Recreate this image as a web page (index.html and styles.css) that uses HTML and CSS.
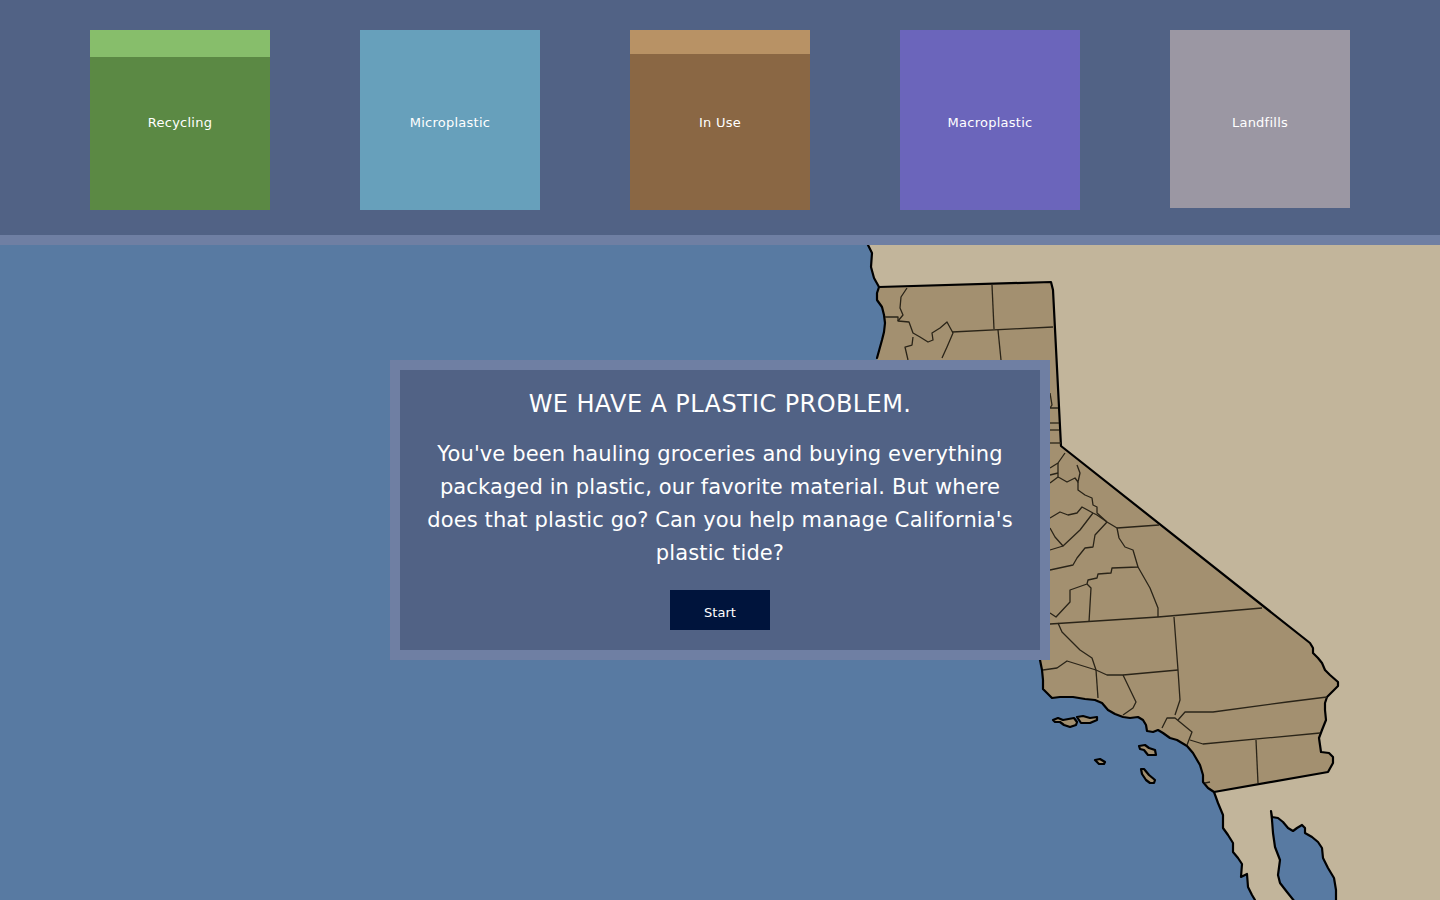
FILE: index.html
```html
<!DOCTYPE html>
<html lang="en">
<head>
<meta charset="utf-8">
<title>Plastic Tide</title>
<link rel="stylesheet" href="styles.css">
</head>
<body>
<header class="topbar">
  <div class="bin bin-recycling"><div class="bin-fill fill-recycling"></div><span class="bin-label">Recycling</span></div>
  <div class="bin bin-micro"><span class="bin-label">Microplastic</span></div>
  <div class="bin bin-inuse"><div class="bin-fill fill-inuse"></div><span class="bin-label">In Use</span></div>
  <div class="bin bin-macro"><span class="bin-label">Macroplastic</span></div>
  <div class="bin bin-landfill"><span class="bin-label">Landfills</span></div>
</header>
<main class="stage">
  <svg class="map" viewBox="0 245 1440 655" width="1440" height="655" aria-hidden="true">
    <path class="land" d="M868 245 L1440 245 L1440 900 L1255 900 L1252 895 L1248 887 L1247 874 L1241 877 L1242 864 L1238 858 L1233 852 L1233 843 L1228 835 L1223 828 L1223 815 L1218 803 L1214 792 L1250 700 L1000 400 L879 287 L874 278 L871 267 L872 253 Z"/>
    <path class="state" d="M879 287 L1051 282 L1053 290 L1061 446 L1310 643 L1313 648 L1313 653 L1318 658 L1322 663 L1325 670 L1330 675 L1338 682 L1338 686 L1332 692 L1327 697 L1325 703 L1325 710 L1326 720 L1322 730 L1319 738 L1321 752 L1329 753 L1333 757 L1333 763 L1328 772 L1214 792 L1208 788 L1203 782 L1203 775 L1200 765 L1193 753 L1187 746 L1177 740 L1170 738 L1163 733 L1158 730 L1153 732 L1147 731 L1146 725 L1143 720 L1138 717 L1130 718 L1123 717 L1115 714 L1108 710 L1102 703 L1095 700 L1085 699 L1073 697 L1060 697 L1052 698 L1047 693 L1043 689 L1043 680 L1042 670 L1040 660 L900 500 L877 358 L882 340 L885 323 L882 307 L877 300 Z"/>
    <path class="coast" d="M868 245 L872 253 L871 267 L874 278 L879 287 L877 293 L877 300 L882 307 L884 315 L885 323 L884 332 L882 340 L877 358"/>
    <path class="coast" d="M1040 660 L1042 670 L1043 680 L1043 689 L1047 693 L1052 698 L1060 697 L1073 697 L1085 699 L1095 700 L1102 703 L1108 710 L1115 714 L1123 717 L1130 718 L1138 717 L1143 720 L1146 725 L1147 731 L1153 732 L1158 730 L1163 733 L1170 738 L1177 740 L1187 746 L1193 753 L1200 765 L1203 775 L1203 782 L1208 788 L1214 792 L1218 803 L1223 815 L1223 828 L1228 835 L1233 843 L1233 852 L1238 858 L1242 864 L1241 877 L1247 874 L1248 887 L1252 895 L1255 900"/>
    <path class="coast" d="M879 287 L1051 282 L1053 290 L1061 446 L1310 643 L1313 648 L1313 653 L1318 658 L1322 663 L1325 670 L1330 675 L1338 682 L1338 686 L1332 692 L1327 697 L1325 703 L1325 710 L1326 720 L1322 730 L1319 738 L1321 752 L1329 753 L1333 757 L1333 763 L1328 772 L1214 792"/>
    <path class="gulf" d="M1271 811 L1272 817 L1278 818 L1283 822 L1288 828 L1293 831 L1297 828 L1302 825 L1305 828 L1305 833 L1312 837 L1318 842 L1322 848 L1323 858 L1328 868 L1334 878 L1336 890 L1336 902 L1295 902 L1287 892 L1280 883 L1278 875 L1280 860 L1275 847 L1273 833 L1272 820 Z"/>
    <path class="island" d="M1053 720 L1058 718 L1063 720 L1074 718 L1077 722 L1076 725 L1070 727 L1064 725 L1060 722 L1055 722 Z"/>
    <path class="island" d="M1077 717 L1083 716 L1090 718 L1097 717 L1097 720 L1090 723 L1081 723 Z"/>
    <path class="island" d="M1095 760 L1100 759 L1105 762 L1104 764 L1099 764 Z"/>
    <path class="island" d="M1139 746 L1145 745 L1149 748 L1155 750 L1156 755 L1148 755 L1144 750 L1140 749 Z"/>
    <path class="island" d="M1141 769 L1144 769 L1149 775 L1155 780 L1154 783 L1150 783 L1146 780 L1142 774 Z"/>
    <g class="counties">
      <path d="M992 285 L994 329"/>
      <path d="M952 332 L1053 327"/>
      <path d="M998 330 L1001 360"/>
      <path d="M907 288 L901 297 L900 308 L903 315 L898 321 L909 322 L913 333 L920 337 L928 342 L933 340 L932 333 L940 328 L947 322 L953 333 L947 347 L942 358"/>
      <path d="M885 317 L898 317 L898 321"/>
      <path d="M913 337 L912 345 L905 347 L908 360"/>
      <path d="M1050 393 L1052 405 L1050 408 L1058 408"/>
      <path d="M1050 423 L1059 423"/>
      <path d="M1050 430 L1059 430"/>
      <path d="M1050 443 L1061 443"/>
      <path d="M1065 453 L1058 463 L1050 468"/>
      <path d="M1058 463 L1058 477 L1050 483"/>
      <path d="M1050 475 L1058 473"/>
      <path d="M1058 477 L1060 478 L1067 482 L1075 478 L1078 482 L1080 473 L1077 465"/>
      <path d="M1078 482 L1078 490 L1085 495 L1092 498 L1093 505 L1097 507 L1097 513 L1107 522 L1117 528 L1159 525"/>
      <path d="M1050 518 L1060 512 L1068 515 L1077 513 L1082 507 L1093 513 L1097 515 L1107 522"/>
      <path d="M1093 513 L1080 530 L1063 546 L1055 537 L1050 528"/>
      <path d="M1050 550 L1063 546"/>
      <path d="M1107 522 L1095 535 L1093 547 L1085 548 L1077 558 L1073 565 L1050 570"/>
      <path d="M1117 528 L1119 538 L1125 547 L1133 550 L1138 567 L1112 568 L1111 573 L1098 574 L1097 578 L1088 580 L1087 584 L1070 590 L1070 602 L1056 617 L1050 613"/>
      <path d="M1138 567 L1150 588 L1158 608 L1158 617"/>
      <path d="M1087 584 L1091 588 L1089 622"/>
      <path d="M1050 624 L1158 617 L1262 608"/>
      <path d="M1174 617 L1178 670 L1180 700 L1175 715"/>
      <path d="M1058 623 L1062 632 L1072 642 L1080 650 L1092 658 L1096 670 L1107 675 L1123 675 L1178 670"/>
      <path d="M1043 670 L1057 668 L1067 661 L1096 670"/>
      <path d="M1096 670 L1098 698"/>
      <path d="M1123 675 L1136 702 L1133 708 L1123 715"/>
      <path d="M1162 728 L1167 718 L1175 718 L1192 732 L1187 745"/>
      <path d="M1178 720 L1185 712 L1213 712 L1287 702 L1327 697"/>
      <path d="M1190 740 L1203 744 L1320 733"/>
      <path d="M1256 740 L1258 783"/>
      <path d="M1205 783 L1210 782"/>
    </g>
  </svg>
  <section class="dialog">
    <h1 class="dialog-title">WE HAVE A PLASTIC PROBLEM.</h1>
    <p class="dialog-text">You've been hauling groceries and buying everything packaged in plastic, our favorite material. But where does that plastic go? Can you help manage California's plastic tide?</p>
    <button class="start" type="button">Start</button>
  </section>
</main>
</body>
</html>
```
FILE: styles.css
```css
* { box-sizing: border-box; }
html, body { margin: 0; height: 100%; }
body {
  width: 1440px;
  height: 900px;
  overflow: hidden;
  background: #587aa2;
  font-family: "DejaVu Sans", sans-serif;
  color: #fff;
  display: flex;
  flex-direction: column;
}
.topbar {
  height: 245px;
  flex: none;
  display: flex;
  justify-content: space-between;
  align-items: flex-start;
  padding: 30px 90px 0;
  background: #516285;
  border-bottom: 10px solid #6f7fa3;
}
.bin {
  position: relative;
  width: 180px;
  height: 180px;
  display: flex;
  align-items: center;
  justify-content: center;
  padding-top: 4px;
  font-size: 13px;
  letter-spacing: 0.25px;
}
.bin-label { position: relative; }
.bin-fill { position: absolute; left: 0; right: 0; top: 0; }
.bin-recycling { background: #5b8944; }
.fill-recycling { height: 27px; background: #87be6b; }
.bin-micro { background: #67a0bb; }
.bin-inuse { background: #8a6744; }
.fill-inuse { height: 24px; background: #b89265; }
.bin-macro { background: #6b65bb; }
.bin-landfill { background: #9b97a3; height: 178px; padding-top: 6px; }
.stage {
  position: relative;
  flex: 1;
}
.map { position: absolute; left: 0; top: 0; display: block; filter: blur(0.3px); }
.land { fill: #c2b59b; }
.state { fill: #a39070; }
.coast { fill: none; stroke: #000; stroke-width: 2.2; stroke-linejoin: round; stroke-linecap: round; }
.gulf { fill: #587aa2; stroke: #000; stroke-width: 2.2; stroke-linejoin: round; }
.island { fill: #a39070; stroke: #000; stroke-width: 2.2; stroke-linejoin: round; }
.counties path { fill: none; stroke: #2a2418; stroke-width: 1.3; stroke-linejoin: round; }
.dialog {
  position: absolute;
  left: 390px;
  top: 115px;
  width: 660px;
  height: 300px;
  padding: 17px 20px 0;
  background: #516285;
  border: 10px solid #6f7fa3;
  text-align: center;
}
.dialog-title {
  margin: 0;
  font-size: 24px;
  line-height: 34px;
  font-weight: 400;
  letter-spacing: 0.4px;
}
.dialog-text {
  margin: 17px 0 20px;
  font-size: 21px;
  line-height: 33px;
  letter-spacing: 0.12px;
}
.start {
  width: 100px;
  height: 40px;
  border: 0;
  padding: 5px 0 0;
  background: #00143c;
  color: #fff;
  font: 13px "DejaVu Sans", sans-serif;
}
```
